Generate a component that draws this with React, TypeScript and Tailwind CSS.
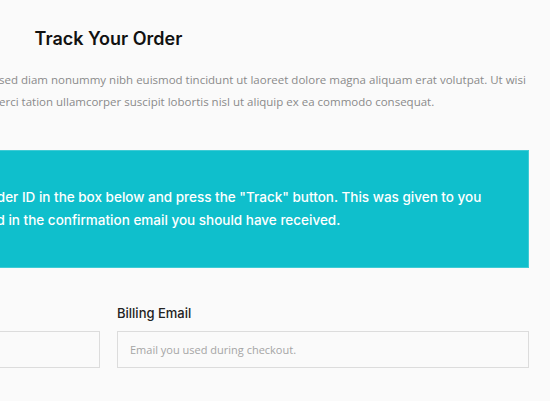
import React from "react";

export default function App() {
  return (
    <main className="h-[401px] w-[550px] overflow-hidden bg-[#fafafa]">
      <div className="ml-[-299px] w-[828px] pt-[25px]">
        <h2 className="pr-[13px] text-center font-['Inter',sans-serif] text-[18px] font-semibold leading-[28px] text-[#111]">
          Track Your Order
        </h2>
        <div className="mt-[16px] ml-[86px] w-[740px] font-['Open_Sans',sans-serif] text-[11.5px] leading-[22px] text-[#8a8a8a]">
          <p className="whitespace-nowrap indent-[-18px]">
            Lorem ipsum dolor sit amet, consectetuer, sed diam nonummy nibh
            euismod tincidunt ut laoreet dolore magna aliquam erat volutpat. Ut
            wisi
          </p>
          <p>
            enim ad minim veniam, quis nostrud exerci tation ullamcorper
            suscipit lobortis nisl ut aliquip ex ea commodo consequat.
          </p>
        </div>

        <div className="mt-[37px] border border-[#3ecbd5] bg-[#0fbfcc] py-[35px] pr-[10px] text-center font-['Inter',sans-serif] text-[13.5px] font-medium leading-[23px] text-white">
          To track your order please enter your Order ID in the box below and
          press the "Track" button. This was given to you
          <br />
          on your receipt and in the confirmation email you should have
          received.
        </div>

        <form className="mt-[35px] grid grid-cols-[399px_412px] gap-[17px]">
          <div className="flex flex-col">
            <label className="font-['Inter',sans-serif] text-[13px] font-medium leading-[20px] text-[#222]">
              Order ID
            </label>
            <input
              className="mt-[8px] h-[37px] border border-[#dcdcdc] bg-[#fafafa] px-[12px] font-['Open_Sans',sans-serif] text-[11px] placeholder:text-[#a5a5a5]"
              placeholder="Found in your order confirmation email."
            />
          </div>
          <div className="flex flex-col">
            <label className="font-['Inter',sans-serif] text-[13px] font-medium leading-[20px] text-[#222]">
              Billing Email
            </label>
            <input
              className="mt-[8px] h-[37px] border border-[#dcdcdc] bg-[#fafafa] px-[12px] font-['Open_Sans',sans-serif] text-[11px] placeholder:text-[#a5a5a5]"
              placeholder="Email you used during checkout."
            />
          </div>
        </form>
      </div>
    </main>
  );
}
